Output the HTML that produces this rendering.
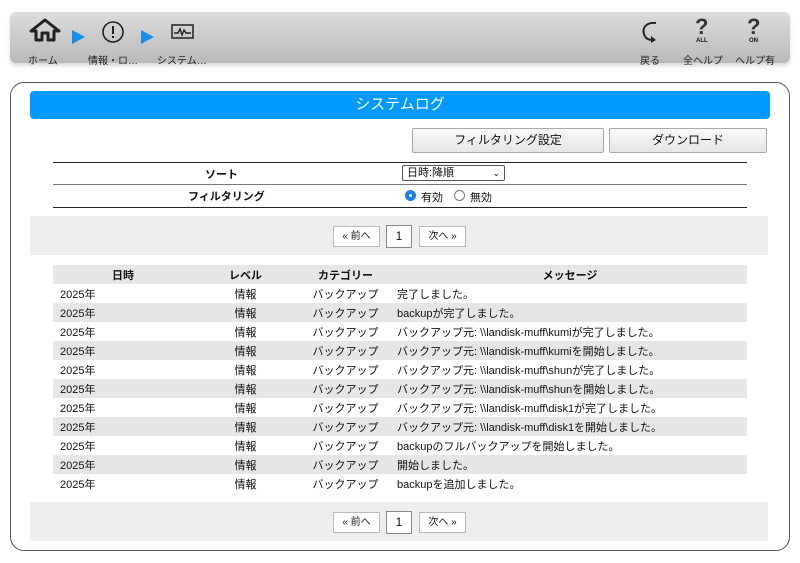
<!DOCTYPE html>
<html><head><meta charset="utf-8">
<style>
*{margin:0;padding:0;box-sizing:border-box}
body{width:800px;height:563px;background:#fff;position:relative;font-family:"Liberation Sans","Noto Sans CJK JP",sans-serif;color:#111;overflow:hidden}
.abs{position:absolute}
.tb{left:10px;top:12px;width:780px;height:51px;border-radius:6px;background:linear-gradient(#dcdcdc,#b9b9b9);box-shadow:0 3px 4px rgba(0,0,0,.15)}
.lbl{font-size:10px;color:#222;top:52px;white-space:nowrap}
.tri{width:0;height:0;border-top:7px solid transparent;border-bottom:7px solid transparent;border-left:13px solid #1a8de8;top:30px}
.panel{left:10px;top:82px;width:780px;height:469px;border:1px solid #555;border-radius:14px}
.hdr{left:30px;top:91px;width:740px;height:28px;background:#0099ff;border-radius:4px;color:#fff;font-size:15px;text-align:center;line-height:28px}
.btn{top:128px;height:25px;border:1px solid #aaa;background:linear-gradient(#f8f8f8,#e6e6e6);border-radius:2px;font-size:12px;text-align:center;line-height:23px}
.line{left:53px;width:694px;height:1px;background:#222}
.band{left:30px;width:738px;height:39px;background:#eee}
.pb{height:21px;border:1px solid #bbb;background:#fff;font-size:10px;text-align:center;line-height:19px}
table{position:absolute;left:53px;top:265px;width:694px;border-collapse:collapse;font-size:11px}
td,th{height:19px;padding:0}
th{font-weight:bold;background:#e6e6e6}
tr:nth-child(odd) td{background:#e6e6e6}
</style></head><body>
<div class="abs tb"></div>
<svg class="abs" style="left:28px;top:18px" width="34" height="26" viewBox="0 0 34 26"><path d="M3 13 L17 2 L31 13 L26 13 L26 22 L20 22 L20 15 L14 15 L14 22 L8 22 L8 13 Z" fill="none" stroke="#222" stroke-width="3" stroke-linejoin="round"/></svg>
<div class="abs lbl" style="left:28px">ホーム</div>
<div class="abs tri" style="left:72px"></div>
<svg class="abs" style="left:101px;top:20px" width="24" height="24"><circle cx="12" cy="12" r="10" fill="none" stroke="#222" stroke-width="1.6"/><rect x="11" y="6" width="2" height="8" fill="#222"/><rect x="11" y="16" width="2" height="2" fill="#222"/></svg>
<div class="abs lbl" style="left:88px">情報・ロ…</div>
<div class="abs tri" style="left:141px"></div>
<svg class="abs" style="left:171px;top:24px" width="24" height="16"><rect x="1" y="1" width="21" height="13" fill="none" stroke="#222" stroke-width="1.5"/><path d="M3 9 L7 9 L9 5 L11 11 L13 6 L15 9 L20 9" fill="none" stroke="#222" stroke-width="1.4"/></svg>
<div class="abs lbl" style="left:157px">システム…</div>
<svg class="abs" style="left:638px;top:20px" width="24" height="24"><path d="M18 3 C8 2 4 8 6 14 C7 18 10 20 15 20" fill="none" stroke="#222" stroke-width="2"/><path d="M13 16 L18 20 L13 23 Z" fill="#222"/></svg>
<div class="abs lbl" style="left:640px">戻る</div>
<div class="abs" style="left:695px;top:14px;font-size:22px;font-weight:bold;color:#333">?</div>
<div class="abs" style="left:696px;top:38px;font-size:6px;font-weight:bold">ALL</div>
<div class="abs lbl" style="left:683px">全ヘルプ</div>
<div class="abs" style="left:747px;top:14px;font-size:22px;font-weight:bold;color:#333">?</div>
<div class="abs" style="left:749px;top:38px;font-size:6px;font-weight:bold">ON</div>
<div class="abs lbl" style="left:735px">ヘルプ有</div>

<div class="abs panel"></div>
<div class="abs hdr">システムログ</div>
<div class="abs btn" style="left:412px;width:192px">フィルタリング設定</div>
<div class="abs btn" style="left:609px;width:158px">ダウンロード</div>
<div class="abs line" style="top:162px"></div>
<div class="abs line" style="top:184px;background:#777"></div>
<div class="abs line" style="top:207px"></div>
<div class="abs" style="left:205px;top:166px;font-size:11px;font-weight:bold">ソート</div>
<div class="abs" style="left:402px;top:165px;width:103px;height:16px;border:1px solid #555;border-radius:2px;font-size:11px;line-height:14px;padding-left:4px">日時:降順<span style="position:absolute;right:4px;font-size:9px">⌄</span></div>
<div class="abs" style="left:188px;top:188px;font-size:11px;font-weight:bold">フィルタリング</div>
<div class="abs" style="left:405px;top:190px;width:11px;height:11px;border-radius:50%;background:#1a7fe8;border:1px solid #1a7fe8"><div style="margin:3px;width:3px;height:3px;border-radius:50%;background:#fff"></div></div>
<div class="abs" style="left:421px;top:189px;font-size:11px">有効</div>
<div class="abs" style="left:454px;top:190px;width:11px;height:11px;border-radius:50%;border:1px solid #777"></div>
<div class="abs" style="left:470px;top:189px;font-size:11px">無効</div>

<div class="abs band" style="top:216px"></div>
<div class="abs pb" style="left:333px;top:226px;width:47px">« 前へ</div>
<div class="abs pb" style="left:386px;top:225px;width:26px;height:23px;border-color:#888;font-size:12px;line-height:21px">1</div>
<div class="abs pb" style="left:419px;top:226px;width:47px">次へ »</div>

<table>
<tr><th style="width:140px">日時</th><th style="width:105px">レベル</th><th style="width:95px">カテゴリー</th><th>メッセージ</th></tr>
<tr><td style="padding-left:7px">2025年</td><td align="center">情報</td><td align="center">バックアップ</td><td style="padding-left:4px">完了しました。</td></tr>
<tr><td style="padding-left:7px">2025年</td><td align="center">情報</td><td align="center">バックアップ</td><td style="padding-left:4px">backupが完了しました。</td></tr>
<tr><td style="padding-left:7px">2025年</td><td align="center">情報</td><td align="center">バックアップ</td><td style="padding-left:4px">バックアップ元: \\landisk-muff\kumiが完了しました。</td></tr>
<tr><td style="padding-left:7px">2025年</td><td align="center">情報</td><td align="center">バックアップ</td><td style="padding-left:4px">バックアップ元: \\landisk-muff\kumiを開始しました。</td></tr>
<tr><td style="padding-left:7px">2025年</td><td align="center">情報</td><td align="center">バックアップ</td><td style="padding-left:4px">バックアップ元: \\landisk-muff\shunが完了しました。</td></tr>
<tr><td style="padding-left:7px">2025年</td><td align="center">情報</td><td align="center">バックアップ</td><td style="padding-left:4px">バックアップ元: \\landisk-muff\shunを開始しました。</td></tr>
<tr><td style="padding-left:7px">2025年</td><td align="center">情報</td><td align="center">バックアップ</td><td style="padding-left:4px">バックアップ元: \\landisk-muff\disk1が完了しました。</td></tr>
<tr><td style="padding-left:7px">2025年</td><td align="center">情報</td><td align="center">バックアップ</td><td style="padding-left:4px">バックアップ元: \\landisk-muff\disk1を開始しました。</td></tr>
<tr><td style="padding-left:7px">2025年</td><td align="center">情報</td><td align="center">バックアップ</td><td style="padding-left:4px">backupのフルバックアップを開始しました。</td></tr>
<tr><td style="padding-left:7px">2025年</td><td align="center">情報</td><td align="center">バックアップ</td><td style="padding-left:4px">開始しました。</td></tr>
<tr><td style="padding-left:7px">2025年</td><td align="center">情報</td><td align="center">バックアップ</td><td style="padding-left:4px">backupを追加しました。</td></tr>
</table>

<div class="abs band" style="top:502px"></div>
<div class="abs pb" style="left:333px;top:512px;width:47px">« 前へ</div>
<div class="abs pb" style="left:386px;top:511px;width:26px;height:23px;border-color:#888;font-size:12px;line-height:21px">1</div>
<div class="abs pb" style="left:419px;top:512px;width:47px">次へ »</div>
</body></html>
